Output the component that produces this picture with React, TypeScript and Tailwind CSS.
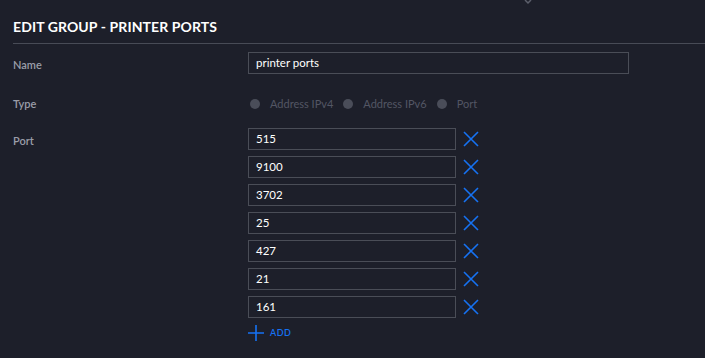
const PORTS = ["515", "9100", "3702", "25", "427", "21", "161"];
const TYPES = ["Address IPv4", "Address IPv6", "Port"];

function CloseIcon() {
  return (
    <svg width="18" height="18" viewBox="0 0 18 18" className="shrink-0">
      <path d="M2 2 L16 16 M16 2 L2 16" stroke="#1672f3" strokeWidth="1.6" fill="none" />
    </svg>
  );
}

function PlusIcon() {
  return (
    <svg width="16" height="16" viewBox="0 0 16 16" className="shrink-0">
      <path d="M8 0 V16 M0 8 H16" stroke="#1672f3" strokeWidth="1.6" fill="none" />
    </svg>
  );
}

function Label({ children }: { children: React.ReactNode }) {
  return (
    <div className="h-[22px] w-[235px] shrink-0 pt-[2px] text-[11px] font-semibold leading-[22px] text-[#9a9da8]">
      {children}
    </div>
  );
}

export default function App() {
  return (
    <div
      className="relative h-[358px] w-full overflow-hidden bg-[#1d1f2a] pl-[13px]"
      style={{ fontFamily: "Lato, 'Open Sans', sans-serif" }}
    >
      <svg width="8" height="5" viewBox="0 0 8 5" className="absolute left-[524px] top-0">
        <path d="M1 0 L4 3 L7 0" stroke="#5c5f6b" strokeWidth="1.5" fill="none" />
      </svg>

      <h1 className="pt-[17px] text-[14px] font-bold leading-[20px] tracking-[0.1px] text-white">
        EDIT GROUP - PRINTER PORTS
      </h1>
      <div className="mt-[6px] h-px bg-[#484b56]" />

      <div className="mt-[8px] flex items-start">
        <Label>Name</Label>
        <div className="flex h-[22px] w-[381px] items-center border border-[#4a4d57] px-[7px] text-[11.5px] text-white">
          printer ports
        </div>
      </div>

      <div className="mt-[19px] flex h-[22px] items-center">
        <div className="w-[235px] shrink-0 text-[11px] font-semibold text-[#9a9da8]">Type</div>
        <div className="flex items-center gap-[10px] pl-[2px]">
          {TYPES.map((t) => (
            <div key={t} className="flex items-center gap-[10px] text-[11px] text-[#535664]">
              <span className="h-[10px] w-[10px] rounded-full bg-[#4a4d59]" />
              {t}
            </div>
          ))}
        </div>
      </div>

      <div className="mt-[13px] flex items-start">
        <Label>Port</Label>
        <div className="flex flex-col gap-[6px]">
          {PORTS.map((p) => (
            <div key={p} className="flex items-center gap-[6px]">
              <div className="flex h-[22px] w-[208px] items-center border border-[#4a4d57] px-[7px] text-[11.5px] text-white">
                {p}
              </div>
              <CloseIcon />
            </div>
          ))}
          <div className="mt-[1px] flex items-center gap-[6px]">
            <PlusIcon />
            <span className="text-[9px] font-semibold tracking-[0.5px] text-[#1672f3]">ADD</span>
          </div>
        </div>
      </div>
    </div>
  );
}
